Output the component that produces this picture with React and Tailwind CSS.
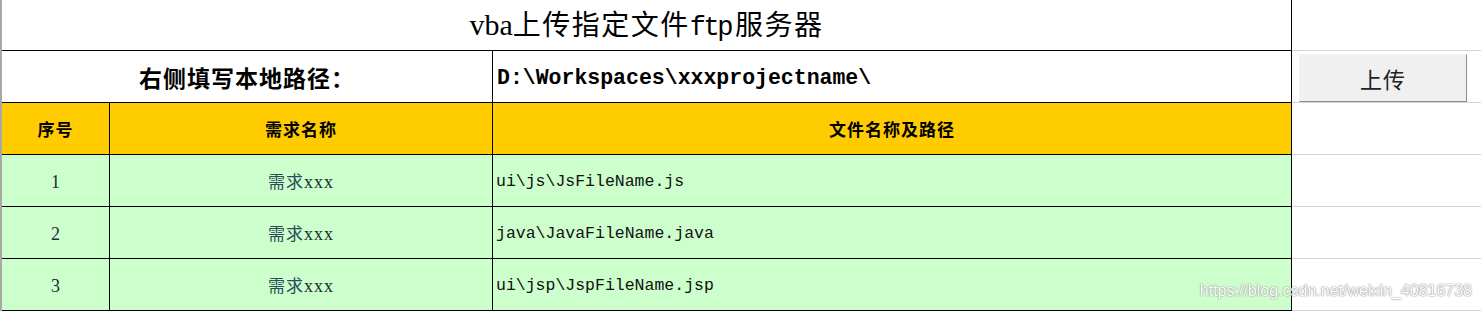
const rows = [
  { no: '1', path: 'ui\\js\\JsFileName.js' },
  { no: '2', path: 'java\\JavaFileName.java' },
  { no: '3', path: 'ui\\jsp\\JspFileName.jsp' },
];

const App = () => {
  return (
    <div className="relative flex w-[1481px] h-[311px] bg-white overflow-hidden text-black">
      {/* Sheet table */}
      <div className="flex flex-col w-[1292px] border-l-2 border-l-[#a8a8a8] border-r border-r-black">
        {/* Title */}
        <div className="h-[51px] border-b border-black flex items-center justify-center pt-[1px] text-[28px] text-black tracking-[1.5px] font-['Noto_Sans_CJK_SC',sans-serif]">
          <p>
            <span className="font-['Liberation_Serif',serif] text-[30px] tracking-normal">vba</span>
            上传指定文件
            <span className="font-['Liberation_Mono',monospace] text-[27px] tracking-[-2.5px] mr-[4px]">ftp</span>
            服务器
          </p>
        </div>

        {/* Local path */}
        <div className="h-[52px] border-b border-black flex">
          <div className="w-[491px] border-r border-black flex items-center justify-center pt-[2px] text-[23px] font-bold tracking-[1px] font-['Noto_Sans_CJK_SC',sans-serif]">
            右侧填写本地路径：
          </div>
          <div className="flex-1 flex items-center pl-[4px] pt-[4px] text-[21.5px] font-bold font-['Liberation_Mono','Noto_Sans_CJK_SC',monospace]">
            D:\Workspaces\xxxprojectname\
          </div>
        </div>

        {/* Header */}
        <div className="h-[52px] border-b border-black flex bg-[#ffcc00] text-[17px] font-bold tracking-[1px] font-['Noto_Sans_CJK_SC',sans-serif]">
          <div className="w-[108px] border-r border-black flex items-center justify-center">序号</div>
          <div className="w-[383px] border-r border-black flex items-center justify-center">需求名称</div>
          <div className="flex-1 flex items-center justify-center">文件名称及路径</div>
        </div>

        {/* Data rows */}
        {rows.map((r) => (
          <div key={r.no} className="h-[52px] border-b border-black flex bg-[#ccffcc] text-[#1c2e36]">
            <div className="w-[108px] border-r border-black flex items-center justify-center pt-[3px] text-[18px] font-['Liberation_Serif',serif]">
              {r.no}
            </div>
            <div className="w-[383px] border-r border-black flex items-center justify-center pt-[3px]">
              <p>
                <span className="text-[17px] tracking-[1px] font-['Noto_Sans_CJK_SC',sans-serif] text-[#2c4a58]">需求</span>
                <span className="text-[18px] tracking-[1px] font-['Liberation_Serif',serif]">xxx</span>
              </p>
            </div>
            <div className="flex-1 flex items-center pl-[3px] pt-[4px] text-[16.5px] text-[#111] font-['Liberation_Mono',monospace]">
              {r.path}
            </div>
          </div>
        ))}
      </div>

      {/* Right empty sheet area */}
      <div className="flex-1 flex flex-col">
        <div className="h-[51px] border-b border-[#d4d4d4]"></div>
        <div className="h-[52px] border-b border-[#d4d4d4] pt-[3px] pl-[7px]">
          <button className="w-[168px] h-[48px] bg-[#f0f0f0] border border-t-[#f4f4f4] border-l-[#f4f4f4] border-r-[#8c8c8c] border-b-[#8c8c8c] flex items-center justify-center text-[22px] text-[#222] tracking-[1px] font-['Noto_Sans_CJK_SC',sans-serif]">
            上传
          </button>
        </div>
        <div className="h-[52px] border-b border-[#d4d4d4]"></div>
        <div className="h-[52px] border-b border-[#d4d4d4]"></div>
        <div className="h-[52px] border-b border-[#d4d4d4]"></div>
        <div className="h-[52px] border-b border-[#d4d4d4]"></div>
      </div>

      {/* Watermark */}
      <div className="absolute right-[9px] top-[279px] text-[16px] text-white font-['Liberation_Sans',sans-serif] [text-shadow:0_0_1px_#7a7a7a,0_0_2px_#a8a8a8]">
        https://blog.csdn.net/weixin_40816738
      </div>
    </div>
  );
};

export default App;
